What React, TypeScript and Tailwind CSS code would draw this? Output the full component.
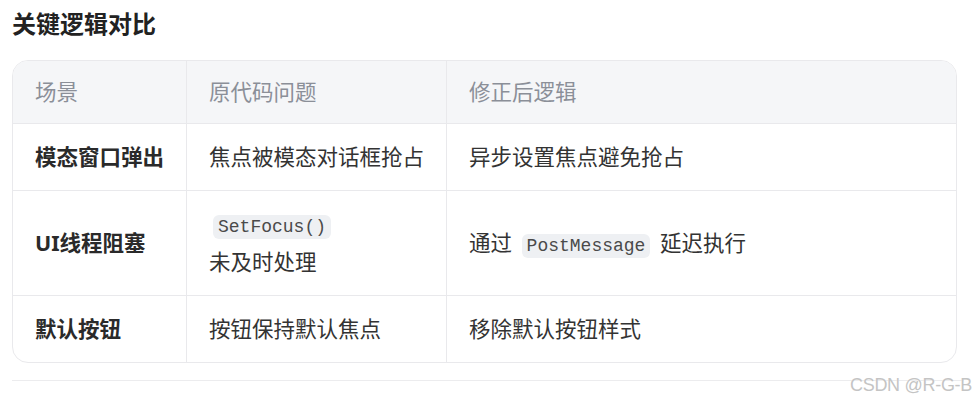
import React from 'react'

const cjk = "font-['Noto_Sans','Noto_Sans_CJK_SC',sans-serif]"

function Code({ children }: { children: React.ReactNode }) {
  return (
    <code className="mx-1 rounded-[6px] bg-[#eef0f3] px-[5px] py-[2px] font-['Liberation_Mono',monospace] text-[18px] leading-[20px] text-[#4a4a4a]">
      {children}
    </code>
  )
}

const rows: { scene: string; problem: React.ReactNode; fix: React.ReactNode }[] = [
  { scene: '模态窗口弹出', problem: '焦点被模态对话框抢占', fix: '异步设置焦点避免抢占' },
  {
    scene: 'UI线程阻塞',
    problem: (
      <>
        <Code>SetFocus()</Code>
        <br />
        未及时处理
      </>
    ),
    fix: (
      <>
        通过 <Code>PostMessage</Code> 延迟执行
      </>
    ),
  },
  { scene: '默认按钮', problem: '按钮保持默认焦点', fix: '移除默认按钮样式' },
]

export default function App() {
  return (
    <div className={`relative h-[402px] w-[976px] overflow-hidden bg-white ${cjk}`}>
      <h2 className="px-3 pt-2 text-[24px] font-bold leading-[32px] text-[#222]">关键逻辑对比</h2>

      {/* comparison table */}
      <div className="ml-3 mt-5 w-[945px] overflow-hidden rounded-[16px] border border-[#e9e9ec]">
        <div className="grid grid-cols-[174px_260px_1fr] bg-[#f5f6f8] text-[21.5px] leading-[36px] text-[#8b8f98]">
          <div className="border-r border-[#e9e9ec] px-[22px] py-[13px]">场景</div>
          <div className="border-r border-[#e9e9ec] px-[22px] py-[13px]">原代码问题</div>
          <div className="px-[22px] py-[13px]">修正后逻辑</div>
        </div>
        {rows.map((r) => (
          <div key={r.scene} className="grid grid-cols-[174px_260px_1fr] border-t border-[#e9e9ec] text-[21.5px] leading-[38px] text-[#333]">
            <div className="flex items-center border-r border-[#e9e9ec] px-[22px] py-[14px] font-bold text-[#2a2a2a]">{r.scene}</div>
            <div className="border-r border-[#e9e9ec] px-[22px] py-[14px]">{r.problem}</div>
            <div className="flex items-center px-[22px] py-[14px]">
              <span>{r.fix}</span>
            </div>
          </div>
        ))}
      </div>

      <div className="ml-3 mt-[17px] w-[952px] border-t border-[#ececee]" />

      <span className="absolute right-[4px] top-[372px] font-['Liberation_Sans',Arial,sans-serif] text-[18px] tracking-[-0.3px] text-[#c4c4c4] [text-shadow:0_0_1px_#fff]">
        CSDN @R-G-B
      </span>
    </div>
  )
}
